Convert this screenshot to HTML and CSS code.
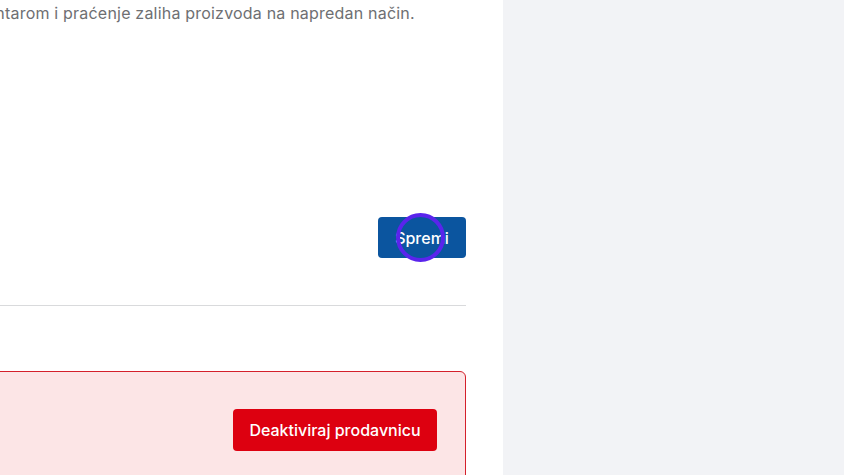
FILE: index.html
```html
<!DOCTYPE html>
<html lang="sr">
<head>
    <meta charset="UTF-8">
    <meta name="viewport" content="width=device-width, initial-scale=1.0">
    <title>Podešavanja prodavnice</title>
    <link rel="stylesheet" href="styles.css">
</head>
<body>
    <div class="page">
        <div class="main">
            <div class="content">
                <p class="desc">Omogućite upravljanje inventarom i praćenje zaliha proizvoda na napredan način.</p>

                <div class="form-actions">
                    <button class="btn btn-primary">Spremi</button>
                    <span class="click-ring"></span>
                </div>

                <hr class="divider">

                <div class="danger-box">
                    <button class="btn btn-danger">Deaktiviraj prodavnicu</button>
                </div>
            </div>
        </div>
        <div class="aside"></div>
    </div>
</body>
</html>
```

FILE: styles.css
```css
/* osnovno */
*{
    padding: 0;
    margin: 0;
    box-sizing: border-box;
}

body{
    font-family: Inter, "Liberation Sans", sans-serif;
    background-color: #ffffff;
}

.page{
    display: flex;
    height: 475px;
    overflow: hidden;
}

.main{
    width: 503px;
    background-color: #ffffff;
    overflow: hidden;
}

.content{
    width: 681px;
    margin-left: -215px;
    padding-top: 3px;
}

.desc{
    font-size: 16px;
    line-height: 20px;
    letter-spacing: 0.2px;
    color: #6e6f72;
    white-space: nowrap;
}

.form-actions{
    display: flex;
    justify-content: flex-end;
    margin-top: 194px;
    position: relative;
}

.btn{
    border: none;
    font-family: inherit;
    font-size: 16px;
    font-weight: 500;
    color: #ffffff;
    border-radius: 4px;
    cursor: pointer;
}

.btn-primary{
    width: 88px;
    height: 41px;
    background-color: #0b559f;
}

/* krug koji pokazuje klik */
.click-ring{
    position: absolute;
    top: -4px;
    right: 21px;
    width: 49px;
    height: 49px;
    border: 4px solid #5a24ec;
    border-radius: 50%;
}

.divider{
    border: none;
    border-top: 1px solid #d9dadc;
    margin-top: 47px;
}

.danger-box{
    margin-top: 65px;
    height: 140px;
    padding: 37px 28px 0 0;
    display: flex;
    justify-content: flex-end;
    align-items: flex-start;
    background-color: #fce5e6;
    border: 1px solid #d4202b;
    border-radius: 6px;
}

.btn-danger{
    width: 204px;
    height: 42px;
    background-color: #dd0010;
}

.aside{
    flex: 1;
    background-color: #f2f3f6;
}
```
